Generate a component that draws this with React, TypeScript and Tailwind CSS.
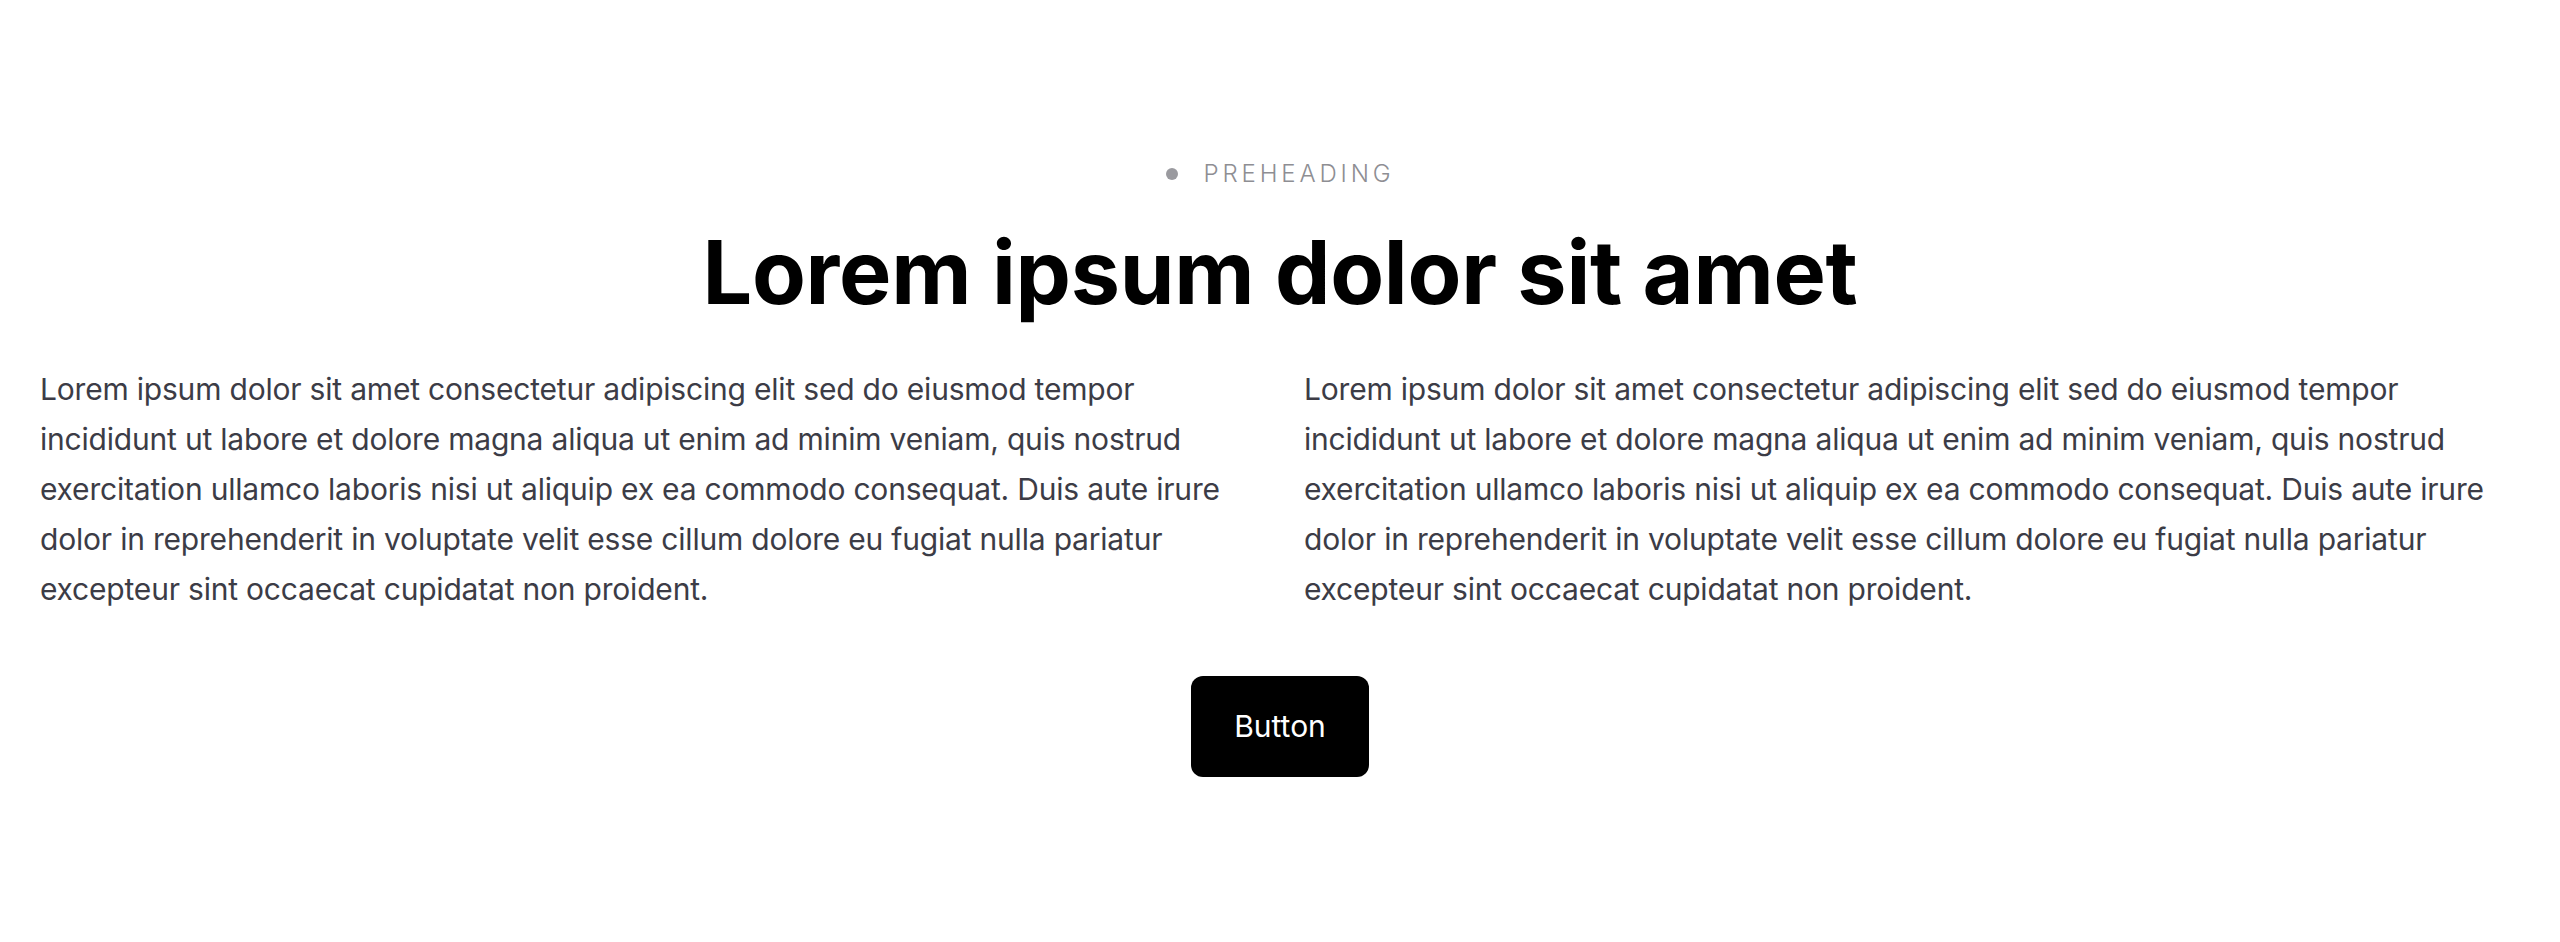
const copy =
  'Lorem ipsum dolor sit amet consectetur adipiscing elit sed do eiusmod tempor incididunt ut labore et dolore magna aliqua ut enim ad minim veniam, quis nostrud exercitation ullamco laboris nisi ut aliquip ex ea commodo consequat. Duis aute irure dolor in reprehenderit in voluptate velit esse cillum dolore eu fugiat nulla pariatur excepteur sint occaecat cupidatat non proident.'

export default function App() {
  return (
    <section className="min-h-screen bg-white px-10 pt-[157px] pb-[164px] font-['Inter',sans-serif]">
      <div className="flex flex-col items-center">
        <div className="flex items-center gap-[26px] text-[24px] leading-[34px] font-light tracking-[0.16em] text-[#8e8e93] uppercase">
          <span className="size-3 rounded-full bg-[#9a9a9f]" />
          <span>Preheading</span>
        </div>

        <h1 className="mt-[37px] text-[88px] leading-none font-bold tracking-[-0.25px] text-black">
          Lorem ipsum dolor sit amet
        </h1>

        <div className="mt-12 grid w-full grid-cols-2 gap-12">
          <p className="text-[30px] leading-[50px] tracking-[-0.2px] text-[#3c3c46]">{copy}</p>
          <p className="text-[30px] leading-[50px] tracking-[-0.2px] text-[#3c3c46]">{copy}</p>
        </div>

        <button className="mt-[62px] h-[101px] rounded-xl bg-black px-[43px] text-[30px] text-white">
          Button
        </button>
      </div>
    </section>
  )
}
